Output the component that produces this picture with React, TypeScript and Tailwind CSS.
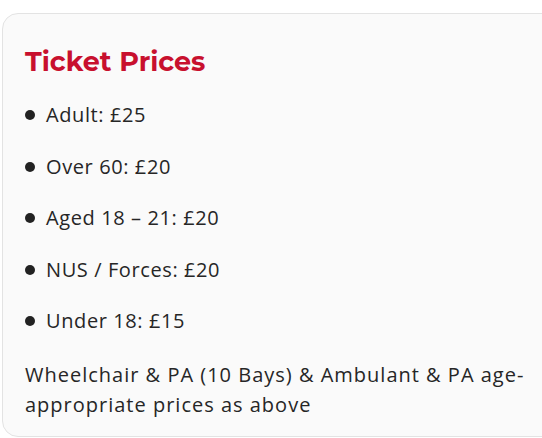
const prices = [
  "Adult: £25",
  "Over 60: £20",
  "Aged 18 – 21: £20",
  "NUS / Forces: £20",
  "Under 18: £15",
];

export default function App() {
  return (
    <div className="h-[438px] w-[542px] overflow-hidden bg-white pl-[2px] pt-[13px]">
      <div className="h-[424px] w-[580px] rounded-2xl border border-[#e3e3e3] bg-[#fafafa] pl-[22px] pt-[30px] text-[#262626]">
        <h2 className="font-['Montserrat','Open_Sans',sans-serif] text-[27px] font-bold leading-[36px] text-[#c8102e]">
          Ticket Prices
        </h2>
        <ul className="mt-[20px] flex flex-col gap-[21.5px] font-['Open_Sans',sans-serif] text-[20px] tracking-[0.6px] leading-[30px]">
          {prices.map((p) => (
            <li key={p} className="flex items-center gap-[11px]">
              <span className="h-[10px] w-[10px] rounded-full bg-[#222]" />
              {p}
            </li>
          ))}
        </ul>
        <p className="mt-[24px] w-[515px] font-['Open_Sans',sans-serif] text-[20px] tracking-[1px] leading-[30px]">
          Wheelchair &amp; PA (10 Bays) &amp; Ambulant &amp; PA age-appropriate prices as above
        </p>
      </div>
    </div>
  );
}
